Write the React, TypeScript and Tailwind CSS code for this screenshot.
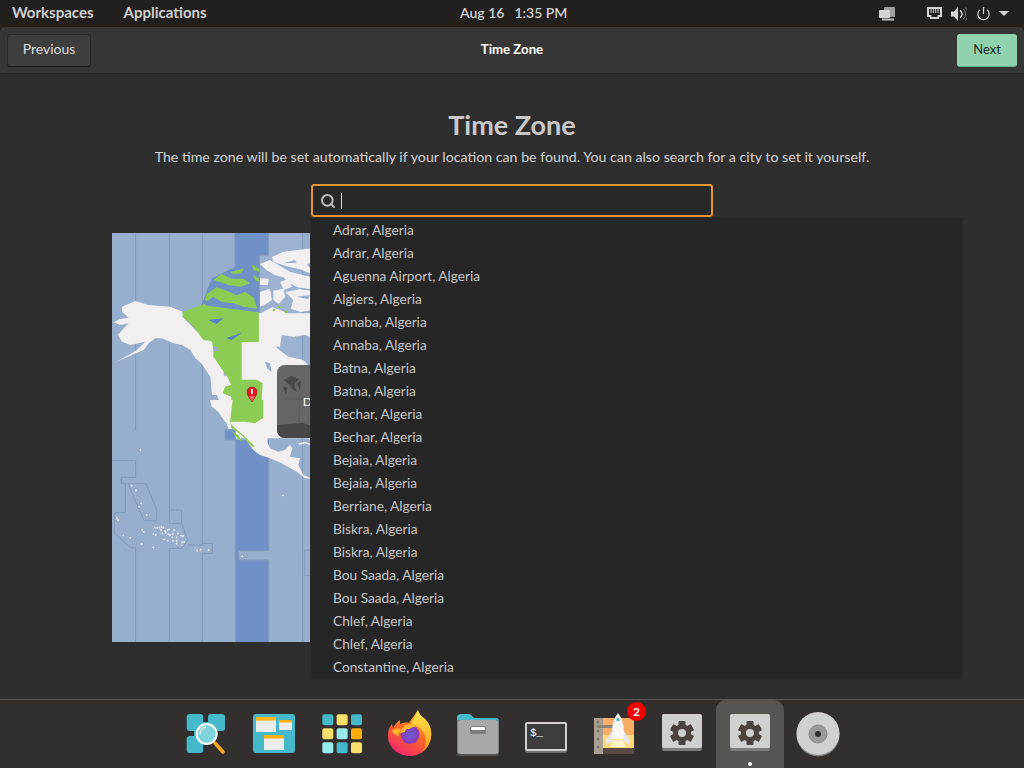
import React from "react"
import { Power, Search } from "lucide-react"

const cities = [
  "Adrar, Algeria", "Adrar, Algeria", "Aguenna Airport, Algeria", "Algiers, Algeria", "Annaba, Algeria",
  "Annaba, Algeria", "Batna, Algeria", "Batna, Algeria", "Bechar, Algeria", "Bechar, Algeria",
  "Bejaia, Algeria", "Bejaia, Algeria", "Berriane, Algeria", "Biskra, Algeria", "Biskra, Algeria",
  "Bou Saada, Algeria", "Bou Saada, Algeria", "Chlef, Algeria", "Chlef, Algeria", "Constantine, Algeria",
]

const islands = [
  [121, 60], [95, 167], [108, 181], [124, 220], [117, 230], [140, 255], [50, 265], [55, 270], [127, 299], [131, 306],
  [70, 316], [91, 323], [125, 342], [160, 352], [160, 312], [167, 314], [166, 293], [172, 294], [179, 293], [185, 291],
  [190, 293], [183, 300], [195, 303], [203, 300], [208, 298], [222, 300], [187, 310], [197, 308], [205, 312], [210, 315],
  [219, 312], [234, 310], [243, 317], [249, 318], [217, 322], [230, 322], [192, 328], [203, 332], [219, 332], [230, 332],
  [230, 341], [246, 337], [252, 336], [245, 346], [286, 355], [291, 362], [302, 359], [326, 360], [427, 379], [549, 196],
]

const land = "#f1efef"
const green = "#8ccc55"
const band = "#7091c5"
const ocean = "#98aecd"
const line = "#8499bb"

function TimeZoneMap() {
  return (
    <svg className="block w-[800px] h-[409px]" viewBox="112 233 800 409">
      <defs>
        <filter id="soft" x="-5%" y="-5%" width="110%" height="110%">
          <feGaussianBlur stdDeviation="0.4" />
        </filter>
      </defs>
      <rect x="112" y="233" width="800" height="409" fill={ocean} />
      <rect x="235.300" y="440" width="33.700" height="202" fill={band} />

      {/* zone lines and pacific islands, coords from the lower crop */}
      <g transform="translate(100 430) scale(.3333)">
        <rect x="416" y="362" width="92" height="28" fill={ocean} />
        <g fill="none" stroke={line} strokeWidth="3">
          <path d="M107 92H36M107 92V142H64V160H76V248H44V310L90 352H107V636" />
          <path d="M84 160H137L170 238V272H132ZM208 240H245V280H208ZM245 280L263 332L245 355H208V636" />
          <path d="M263 345H307V340H337V370H307V636" />
          <path d="M406 30V636M506 60V362H416V390H506V636M608 80V636M613 360H630M613 360V436H630" />
        </g>
        {islands.map(([x, y], i) => (
          <circle key={i} cx={x} cy={y} r="2.800" fill="#f4f4f4" />
        ))}
      </g>
      <path d="M135.600 233V430M169.300 233V510M202.300 233V545M235.300 233V290M269 233V256M302.300 233V460" stroke={line} fill="none" />

      <g filter="url(#soft)">
        {/* arctic: crop at 200,250 */}
        <g transform="translate(200 250) scale(.3333)">
          <path d="M105 -60H205V17H178V190L0 172L10 150L35 85L105 50Z" fill={band} />
          <path d="M178 17H205V-60H306V330H178Z" fill="#9db2d0" />
          <path d="M105 -60V50M205 -60V17H178V190" stroke={line} strokeWidth="3" fill="none" />
          <g fill={land}>
            <path d="M215 22L250 5L336 -5V40L320 42L336 60V72L300 58L272 52L248 45L222 36Z" />
            <path d="M180 42L210 30L240 48L272 66L336 82V118L292 112L270 100L250 82L226 76L202 62Z" />
            <path d="M180 85L206 86L204 106L180 104Z" />
            <path d="M240 96L265 86L276 110L252 120Z" />
            <path d="M180 126L210 116L216 150L192 166L180 170Z" />
            <path d="M220 122L250 116L256 140L236 162L220 150Z" />
            <path d="M256 126L300 118L336 122V180L302 186L272 176L280 150Z" />
            <path d="M178 192L216 172L232 176L246 182L272 196L290 214L320 234L336 240V262L300 250L280 262L272 242L246 252L240 290H178Z" />
          </g>
          <path d="M290 140L330 135L325 148ZM250 40L285 30L290 38Z" fill="#9db2d0" />
          <g fill={green}>
            <path d="M0 168L12 162L40 176L80 190L178 196V290H0Z" />
            <path d="M20 132L50 112L80 122L110 136L135 126L160 142L172 176L130 170L100 160L65 156L40 140L25 152L14 150Z" />
            <path d="M40 90L65 72L95 86L130 86L150 100L122 110L86 105L60 96Z" />
            <path d="M90 66L130 56L125 70L100 72Z" />
            <path d="M155 45L176 55L178 66L160 60Z" />
            <path d="M160 76L178 86V96L165 90Z" />
            <circle cx="222" cy="180" r="4" />
            <circle cx="238" cy="171" r="4" />
            <circle cx="258" cy="185" r="4" />
          </g>
          <g fill="#5a80bd">
            <path d="M25 214L72 206L50 226L30 226Z" />
            <path d="M80 268L126 246L112 264L92 270Z" />
            <path d="M40 182L90 178L120 186L60 188Z" />
          </g>
        </g>

        {/* alaska and west coast: crop at 112,295 */}
        <g transform="translate(112 295) scale(.3333)">
          <path
            d="M30 35L70 18L110 30L175 35L212 50L212 65L250 105L300 140L305 170L335 215L336 300L300 300L295 245L268 205L250 190L235 165L210 150L185 145L150 130L130 130L110 145L95 165L60 180L25 195L5 205L40 185L75 165L100 140L55 150L30 140L18 120L35 100L50 85L25 90L5 82L25 72L50 68L30 50Z"
            fill={land}
          />
          <path d="M212 50L275 30L295 50V110L300 140L212 65Z" fill={green} />
        </g>

        {/* canada / us interior, crop at 100,225 */}
        <g transform="translate(100 225) scale(.3333)">
          <path d="M476 265H630V328L580 335L545 330L525 350L530 368L565 395L610 405L630 425V640H425V350H476Z" fill={land} />
          <path d="M336 465L385 450L425 350V640H395Z" fill={land} />
          <path d="M248 262L305 240L476 262V350L425 352V464L470 464L488 475L484 540L470 548V588L452 598L432 590L395 592L394 515L368 505L375 485L393 480L384 458L340 395V378L355 378V350L310 345Z" fill={green} />
          <path d="M325 285L370 280L350 298ZM378 340L428 322L395 345Z" fill="#5a80bd" />
          <path d="M495 410L510 415L515 440L503 432Z" fill={ocean} />
        </g>

        {/* mexico: crop at 210,400 */}
        <g transform="translate(210 400) scale(.3333)">
          <path d="M0 0H200V85L175 95L172 125L180 145L205 155L225 150L240 135L247 145L240 170L270 175L265 195L280 225L303 235V236L285 235L260 215L215 190L180 175L150 165L130 150L115 130L100 105L80 90L60 72L45 65L25 35L5 20Z" fill={land} />
          <rect x="45" y="88" width="31" height="32" fill={band} stroke={line} strokeWidth="2" />
          <path d="M68 0H160V55L150 60L135 70L105 65H65L60 68L75 85L100 105L135 140L125 140L95 105L65 85L60 65Z" fill={green} />
          <path d="M64 92L85 105L98 127L85 118Z" fill={green} />
          <path d="M290 90L303 88V125L295 112Z" fill={land} />
          <path d="M265 130L285 125L303 132V136L285 130L268 135Z" fill={land} />
        </g>
      </g>

      {/* location pin */}
      <path d="M252 387c-3.400 0-5 2.400-5 5 0 3.600 3.400 6.800 5 10 1.600-3.200 5-6.400 5-10 0-2.600-1.600-5-5-5Z" fill="#de1a24" stroke="#a8121a" strokeWidth=".6" />
      <rect x="251" y="389" width="2" height="5" fill="#f6d5d5" />
      <path d="M249 396h6l-3 5Z" fill="#ee6a6a" />
    </svg>
  )
}

function SearchIcon() {
  return (
    <svg width="48" height="48" viewBox="0 0 48 48">
      <rect x="4.700" y="5" width="16.500" height="17" rx="3" fill="#45b8c9" />
      <rect x="26" y="5" width="17" height="17" rx="3" fill="#45b8c9" />
      <rect x="4.700" y="27" width="16.500" height="17" rx="3" fill="#45b8c9" />
      <rect x="12" y="13" width="20" height="20" fill="#45b8c9" />
      <path d="M33 34L41 43" stroke="#f7a823" strokeWidth="3.500" strokeLinecap="round" />
      <circle cx="24.700" cy="25" r="10" fill="#7fd3df" stroke="#fff" strokeWidth="2" />
      <path d="M18 25a7 7 0 0 1 6-7" stroke="#fff" strokeWidth="1.200" fill="none" />
    </svg>
  )
}

function MultitaskIcon() {
  return (
    <svg width="48" height="48" viewBox="0 0 48 48">
      <rect x="3" y="5" width="42" height="39" rx="3" fill="#45b8c9" />
      <rect x="6" y="8" width="20" height="15" fill="#ececec" />
      <rect x="6" y="8" width="20" height="3.500" fill="#fbb216" />
      <rect x="29" y="11" width="13" height="10" fill="#ececec" />
      <rect x="29" y="11" width="13" height="2.500" fill="#fbb216" />
      <rect x="14" y="26" width="20" height="15" fill="#ececec" />
      <rect x="14" y="26" width="20" height="3.500" fill="#fbb216" />
    </svg>
  )
}

function AppsIcon() {
  const colors = ["#45b8c9", "#f7e06b", "#45b8c9", "#f7e06b", "#99ecec", "#fbad0d", "#99ecec", "#45b8c9", "#f7e06b"]
  return (
    <svg width="48" height="48" viewBox="0 0 48 48">
      {colors.map((c, i) => (
        <rect key={i} x={4.300 + (i % 3) * 14.350} y={5.300 + Math.floor(i / 3) * 14} width="11" height="11" rx="2" fill={c} />
      ))}
    </svg>
  )
}

function FirefoxIcon() {
  return (
    <svg width="48" height="48" viewBox="0 0 48 48">
      <defs>
        <linearGradient id="ff1" x1="0.800" y1="0" x2="0.300" y2="1">
          <stop offset="0" stopColor="#ffc328" />
          <stop offset="0.500" stopColor="#ff6b25" />
          <stop offset="1" stopColor="#f0246e" />
        </linearGradient>
        <linearGradient id="ff2" x1="0.500" y1="0" x2="0.500" y2="1">
          <stop offset="0" stopColor="#ffe84f" />
          <stop offset="1" stopColor="#ff9a1f" />
        </linearGradient>
        <radialGradient id="ff3">
          <stop offset="0" stopColor="#6f5bd8" />
          <stop offset="1" stopColor="#8a3ab0" />
        </radialGradient>
      </defs>
      <path d="M32 1c1 4 3 6 7 9 5 5 7 12 6 18-1 11-10 19-21 19C12 47 2 38 2 27c0-5 1-9 4-12l1 5c1-4 4-7 7-9l0 4c3-1 6-2 9-1 2-4 6-8 9-13Z" fill="url(#ff1)" />
      <path d="M32 1c1 4 3 6 7 9 5 5 7 12 6 18-.5 6-4 11-8 14 3-5 4-12 1-18-3-5-8-8-13-9 2-5 5-9 7-14Z" fill="url(#ff2)" />
      <circle cx="24" cy="25.500" r="9.500" fill="url(#ff3)" />
      <path d="M14 25c0-5 5-10 12-10 3 0 5 1 7 3-3-1-6 0-8 1-1 1-2 1-4 1-2 1-2 2-2 3-2 0-4 1-5 2Z" fill="#ffb62e" />
      <path d="M6 22c3-3 7-3 9-1-2 2-2 4-3 6-3-1-5-3-6-5Z" fill="#ffb62e" />
    </svg>
  )
}

function FolderIcon() {
  return (
    <svg width="48" height="48" viewBox="0 0 48 48">
      <path d="M3 9a4 4 0 0 1 4-4h9l4 4h22a3 3 0 0 1 3 3v4H3Z" fill="#45b8c9" />
      <rect x="3" y="11" width="42" height="36" rx="3" fill="#555" />
      <rect x="3.500" y="11" width="41" height="34" rx="3" fill="#a8a8a8" />
      <rect x="16" y="17" width="16" height="8" rx="1.500" fill="#7d7d7d" />
      <rect x="17" y="18" width="14" height="3" fill="#fff" />
    </svg>
  )
}

function TerminalIcon() {
  return (
    <svg width="48" height="48" viewBox="0 0 48 48">
      <rect x="3" y="15" width="42" height="29" rx="2" fill="#6d6d6d" />
      <rect x="3" y="13" width="42" height="29" rx="2" fill="#d0d0d0" />
      <rect x="5" y="15" width="38" height="25" fill="#3c3c3c" />
      <text x="8" y="27" fontSize="11" fontFamily="'Liberation Mono', monospace" fill="#fff">$_</text>
    </svg>
  )
}

function AppCenterIcon() {
  return (
    <svg width="48" height="48" viewBox="0 0 48 48">
      <rect x="4" y="9" width="40" height="36" rx="2" fill="#f8ae64" />
      <rect x="12" y="26" width="32" height="13" fill="#fbd980" />
      <rect x="4" y="39" width="40" height="6" fill="#5a4a44" />
      <rect x="4" y="9" width="9" height="36" fill="#a99e92" />
      <rect x="7" y="16" width="24" height="3" fill="#8d8379" />
      <circle cx="8" cy="13" r="1.500" fill="#7f766d" />
      <circle cx="8" cy="22" r="1.500" fill="#7f766d" />
      <circle cx="8" cy="30" r="1.500" fill="#7f766d" />
      <circle cx="8" cy="38" r="1.500" fill="#7f766d" />
      <path d="M28 4c5 6 6.500 15 6 26H22C21.500 19 23 10 28 4Z" fill="#f6f6f6" />
      <path d="M22 22l-6 9 .5 5 6-4ZM34 22l6 9-.5 5-6-4Z" fill="#e6e6e6" />
      <rect x="26.500" y="9" width="3" height="3" fill="#45b8c9" />
      <path d="M23 31h10l2.500 7H20.500Z" fill="#fff3c9" />
    </svg>
  )
}

function SettingsIcon() {
  const teeth = [0, 60, 120, 180, 240, 300]
  return (
    <svg width="48" height="48" viewBox="0 0 48 48">
      <rect x="4" y="8" width="40" height="34" rx="2" fill="#7c7c7c" />
      <rect x="4" y="5" width="40" height="34" rx="2" fill="#cfcfcf" />
      <g fill="#4b4340">
        {teeth.map((a) => (
          <rect key={a} x="20.500" y="12" width="7" height="6" rx="1" transform={`rotate(${a} 24 24)`} />
        ))}
      </g>
      <circle cx="24" cy="24" r="6.500" fill="none" stroke="#4b4340" strokeWidth="5" />
    </svg>
  )
}

function DiscIcon() {
  return (
    <svg width="48" height="48" viewBox="0 0 48 48">
      <circle cx="24" cy="26" r="21.500" fill="#7e7e7e" />
      <circle cx="24" cy="24.500" r="21.500" fill="#d0d0d0" />
      <circle cx="24" cy="25" r="9" fill="#9a9a9a" stroke="#8a8a8a" />
      <circle cx="24" cy="25" r="3" fill="#2e2e2e" />
    </svg>
  )
}

const dockItems = [SearchIcon, MultitaskIcon, AppsIcon, FirefoxIcon, FolderIcon, TerminalIcon, AppCenterIcon, SettingsIcon, SettingsIcon, DiscIcon]

export default function App() {
  return (
    <div className="w-[1024px] h-[768px] overflow-hidden flex flex-col bg-[#221f1f] text-[14px] font-['Lato','Noto_Sans',sans-serif]">
      {/* top panel */}
      <div className="h-[27px] shrink-0 flex items-center justify-between relative text-[#cfcfcf] font-bold px-3">
        <div className="flex gap-[30px] text-[15px] -mt-[3px]">
          <span>Workspaces</span>
          <span>Applications</span>
        </div>
        <div className="absolute left-[460px] flex gap-[10px] font-semibold -mt-[3px]">
          <span>Aug 16</span>
          <span>1:35 PM</span>
        </div>
        <div className="flex items-center text-[#d4d4d4]">
          <svg width="16" height="14" viewBox="0 0 16 14" className="mr-[32px]">
            <rect x="5" y="0" width="11" height="10" rx="1" fill="#a0a0a0" />
            <rect x="0" y="3" width="11" height="8" rx="1" fill="#d4d4d4" />
            <rect x="3" y="11.500" width="12" height="2" fill="#c0c0c0" />
          </svg>
          <svg width="15" height="13" viewBox="0 0 15 13" className="mr-[9px]">
            <path d="M0 0H15V10H12V12H3V10H0Z" fill="#d4d4d4" />
            <path d="M2 2H13V8H10.500V10H4.500V8H2Z" fill="#221f1f" />
            <path d="M4 2V6M6.300 2V6M8.700 2V6M11 2V6" stroke="#d4d4d4" />
          </svg>
          <svg width="16" height="16" viewBox="0 0 16 16" className="mr-[9px]">
            <path d="M0 5.500H3L7 1V15L3 10.500H0Z" fill="#d4d4d4" />
            <path d="M9 4.500a4 4 0 0 1 0 7" stroke="#d4d4d4" strokeWidth="1.500" fill="none" />
            <path d="M12 2.500a7 7 0 0 1 0 11M14.500 1.500a9 9 0 0 1 0 13" stroke="#777" fill="none" />
          </svg>
          <Power size={15} strokeWidth={2} className="mr-[8px]" />
          <div className="w-0 h-0 border-l-[5px] border-r-[5px] border-t-[5px] border-l-transparent border-r-transparent border-t-[#d4d4d4] mr-[3px]" />
        </div>
      </div>

      {/* window */}
      <div className="flex-1 flex flex-col bg-[#2e2e2e] rounded-t-[5px]">
        <div className="h-[47px] shrink-0 bg-[#363636] rounded-t-[5px] border-b border-[#242424] flex items-center justify-between px-[7px] relative">
          <button className="w-[84px] h-[33px] rounded-[3px] bg-[#3e3e3e] border border-[#2a2a2a] border-b-[#1a1a1a] text-[#dcdcdc] pb-[3px]">Previous</button>
          <span className="absolute left-0 right-0 text-center font-bold text-[13.2px] text-white pointer-events-none pb-[1px]">Time Zone</span>
          <button className="w-[60px] h-[33px] rounded-[3px] bg-[#90d2ae] border-b border-[#5fae85] text-[#1f2b25] text-[13px]">Next</button>
        </div>

        <div className="flex-1 flex flex-col items-center">
          <h1 className="mt-[33px] text-[27px] leading-[36px] font-bold text-[#c8c8c8]">Time Zone</h1>
          <p className="mt-[3px] leading-[22px] text-[14.2px] text-[#d2d2d2]">
            The time zone will be set automatically if your location can be found. You can also search for a city to set it yourself.
          </p>
          <div className="relative w-[402px] h-[33px] mt-[16px] z-10">
            <div className="h-full flex items-center rounded-[3px] border-2 border-[#e8952f] bg-[#282828] pl-[7px]">
              <Search size={16} strokeWidth={3} className="text-[#bdbdbd]" />
              <div className="ml-[5px] w-px h-[16px] bg-[#d8d8d8]" />
            </div>
            <div className="absolute left-[-1px] top-[33px] w-[653px] h-[463px] bg-[#262626] border border-[#2b2b2b] pl-[22px] pt-px">
              {cities.map((c, i) => (
                <div key={i} className="h-[23px] leading-[22px] text-[13.7px] text-[#c4c4c4]">{c}</div>
              ))}
            </div>
          </div>
          <div className="relative mt-[16px]">
            <TimeZoneMap />
            {/* tooltip with a small map behind the city name */}
            <div className="absolute left-[165px] top-[132px] w-[90px] h-[73px] rounded-[8px] overflow-hidden bg-[#666666] flex items-center justify-center">
              <svg className="absolute inset-0" width="90" height="73" viewBox="0 0 90 73">
                <path d="M0 60L25 58L40 62L70 56L90 58V73H0Z" fill="#484848" />
                <path d="M7 15L14 11L22 14L17 19L20 27L15 24L12 19ZM20 18L24 16L23 26ZM6 21L10 23L9 30Z" fill="#484848" />
                <path d="M22 30V58M2 34H40" stroke="#5a5a5a" fill="none" />
              </svg>
              <span className="relative text-white text-[12px] pt-[1px]">Denver</span>
            </div>
          </div>
        </div>

        {/* dock */}
        <div className="h-[69px] shrink-0 bg-[#332f2e] border-t border-[#5a5755] flex justify-center">
          {dockItems.map((Icon, i) => (
            <div key={i} className={`relative w-[68px] h-[68px] flex justify-center pt-[9px] rounded-t-[10px] ${i === 8 ? "bg-[#575552]" : ""}`}>
              <Icon />
              {i === 6 && (
                <span className="absolute left-[47px] top-[2px] w-[19px] h-[19px] rounded-full bg-[#f00000] text-white text-[12px] font-bold flex items-center justify-center">2</span>
              )}
              {i === 8 && <span className="absolute left-[32px] bottom-[2px] w-[4px] h-[4px] rounded-full bg-white" />}
            </div>
          ))}
        </div>
      </div>
    </div>
  )
}
